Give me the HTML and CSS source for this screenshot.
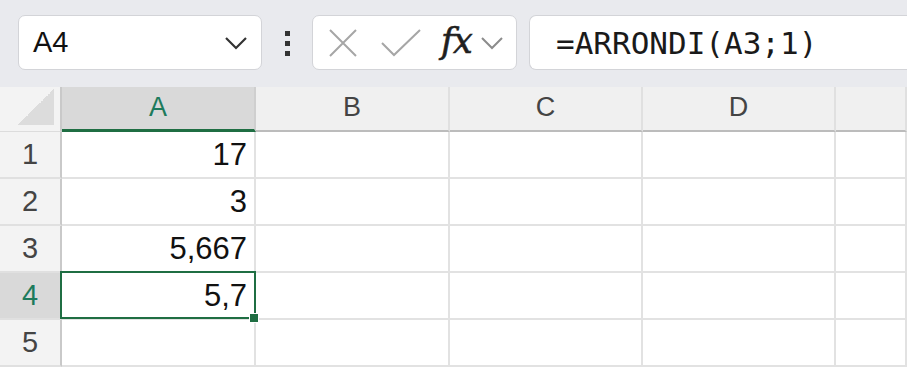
FILE: index.html
```html
<!DOCTYPE html>
<html lang="fr">
<head>
  <meta charset="UTF-8">
  <title>Classeur</title>
  <link rel="stylesheet" href="styles.css">
</head>
<body>
  <div class="toolbar">
    <div class="namebox">
      <span class="ref">A4</span>
      <svg class="chev" width="24" height="14" viewBox="0 0 24 14"><path d="M2 2 L12 12 L22 2" fill="none" stroke="#333" stroke-width="2.2"/></svg>
    </div>
    <div class="dots"><i></i><i></i><i></i></div>
    <div class="fxbox">
      <svg class="ico" width="30" height="28" viewBox="0 0 30 28"><path d="M2 1 L28 27 M28 1 L2 27" stroke="#a6a6a6" stroke-width="2"/></svg>
      <svg class="ico" width="40" height="28" viewBox="0 0 40 28"><path d="M1 14 L13 26 L39 1" fill="none" stroke="#a6a6a6" stroke-width="2"/></svg>
      <span class="fx">fx</span>
      <svg class="chev small" width="24" height="14" viewBox="0 0 24 14"><path d="M2 2 L12 12 L22 2" fill="none" stroke="#8c8c8c" stroke-width="2"/></svg>
    </div>
    <div class="formula">=ARRONDI(A3;1)</div>
  </div>

  <div class="sheet">
    <div class="corner"></div>
    <div class="colhead sel">A</div>
    <div class="colhead">B</div>
    <div class="colhead">C</div>
    <div class="colhead">D</div>
    <div class="colhead"></div>

    <div class="rowhead">1</div>
    <div class="cell">17</div><div class="cell"></div><div class="cell"></div><div class="cell"></div><div class="cell"></div>

    <div class="rowhead">2</div>
    <div class="cell">3</div><div class="cell"></div><div class="cell"></div><div class="cell"></div><div class="cell"></div>

    <div class="rowhead">3</div>
    <div class="cell">5,667</div><div class="cell"></div><div class="cell"></div><div class="cell"></div><div class="cell"></div>

    <div class="rowhead sel">4</div>
    <div class="cell active">5,7</div><div class="cell"></div><div class="cell"></div><div class="cell"></div><div class="cell"></div>

    <div class="rowhead">5</div>
    <div class="cell"></div><div class="cell"></div><div class="cell"></div><div class="cell"></div><div class="cell"></div>
  </div>
</body>
</html>
```

FILE: styles.css
```css
body {
  margin: 0;
  width: 907px;
  height: 370px;
  overflow: hidden;
  background: #fff;
  font-family: "Liberation Sans", Arial, sans-serif;
  color: #111;
}

.toolbar {
  height: 87px;
  box-sizing: border-box;
  padding: 15px 0 0 18px;
  background: #e9eaee;
  display: flex;
  align-items: flex-start;
}

.namebox,
.fxbox,
.formula {
  height: 55px;
  box-sizing: border-box;
  background: #fff;
  border: 1px solid #d3d4d8;
  border-radius: 7px;
  display: flex;
  align-items: center;
}

.namebox {
  width: 244px;
  padding: 0 13px 0 14px;
  justify-content: space-between;
}

.ref {
  font-size: 29px;
}

.dots {
  width: 50px;
  display: flex;
  flex-direction: column;
  align-items: center;
  gap: 5px;
  padding-top: 16px;
}

.dots i {
  width: 5px;
  height: 5px;
  background: #333;
}

.fxbox {
  width: 205px;
  padding-left: 15px;
}

.fxbox .ico {
  margin-right: 23px;
}

.fx {
  font-family: "DejaVu Serif", "Liberation Serif", serif;
  font-style: italic;
  font-size: 35px;
  color: #1f1f1f;
  -webkit-text-stroke: 0.6px #1f1f1f;
  margin-left: -3px;
  margin-top: -4px;
  letter-spacing: -1px;
}

.chev.small {
  margin-left: 8px;
}

.formula {
  flex: 1;
  margin-left: 12px;
  border-right: none;
  border-radius: 7px 0 0 7px;
  padding-left: 26px;
  font-family: "DejaVu Sans Mono", "Liberation Mono", monospace;
  font-size: 31px;
  color: #1a1a1a;
}

.sheet {
  display: grid;
  grid-template-columns: 62px 194px 194px 193px 193px 1fr;
  grid-template-rows: 45px repeat(5, 47px);
}

.corner {
  background: #f3f3f3 linear-gradient(to top left, #dcdcdc 50%, transparent 50%) no-repeat;
  background-size: 36px 36px;
  background-position: right 6px bottom 6px;
  border-right: 2px solid #c9c9c9;
  border-bottom: 1px solid #dcdcdc;
}

.colhead {
  background: #f0f0f0;
  border-right: 2px solid #e0e0e0;
  border-bottom: 2px solid #bcbcbc;
  font-size: 27px;
  color: #444;
  display: flex;
  align-items: center;
  justify-content: center;
  padding-bottom: 2px;
}

.colhead.sel {
  background: #d9d9d9;
  color: #1e7b5c;
  border-bottom: 3px solid #1f6e43;
  border-right-color: #cfcfcf;
}

.rowhead {
  background: #f3f3f3;
  border-right: 2px solid #c9c9c9;
  border-bottom: 2px solid #e0e0e0;
  font-size: 29px;
  color: #444;
  display: flex;
  align-items: center;
  justify-content: center;
}

.rowhead.sel {
  background: #d9d9d9;
  color: #1e7b5c;
}

.cell {
  border-right: 2px solid #e2e2e2;
  border-bottom: 2px solid #e2e2e2;
  font-size: 31px;
  padding-right: 7px;
  display: flex;
  align-items: center;
  justify-content: flex-end;
}

.cell.active {
  position: relative;
}

.cell.active::before {
  content: "";
  position: absolute;
  left: -2px;
  top: -2px;
  right: -2px;
  bottom: -1px;
  border: 2px solid #1f6e43;
}

.cell.active::after {
  content: "";
  position: absolute;
  right: -5px;
  bottom: -5px;
  width: 8px;
  height: 8px;
  background: #1f6e43;
  border: 1px solid #fff;
}
```
